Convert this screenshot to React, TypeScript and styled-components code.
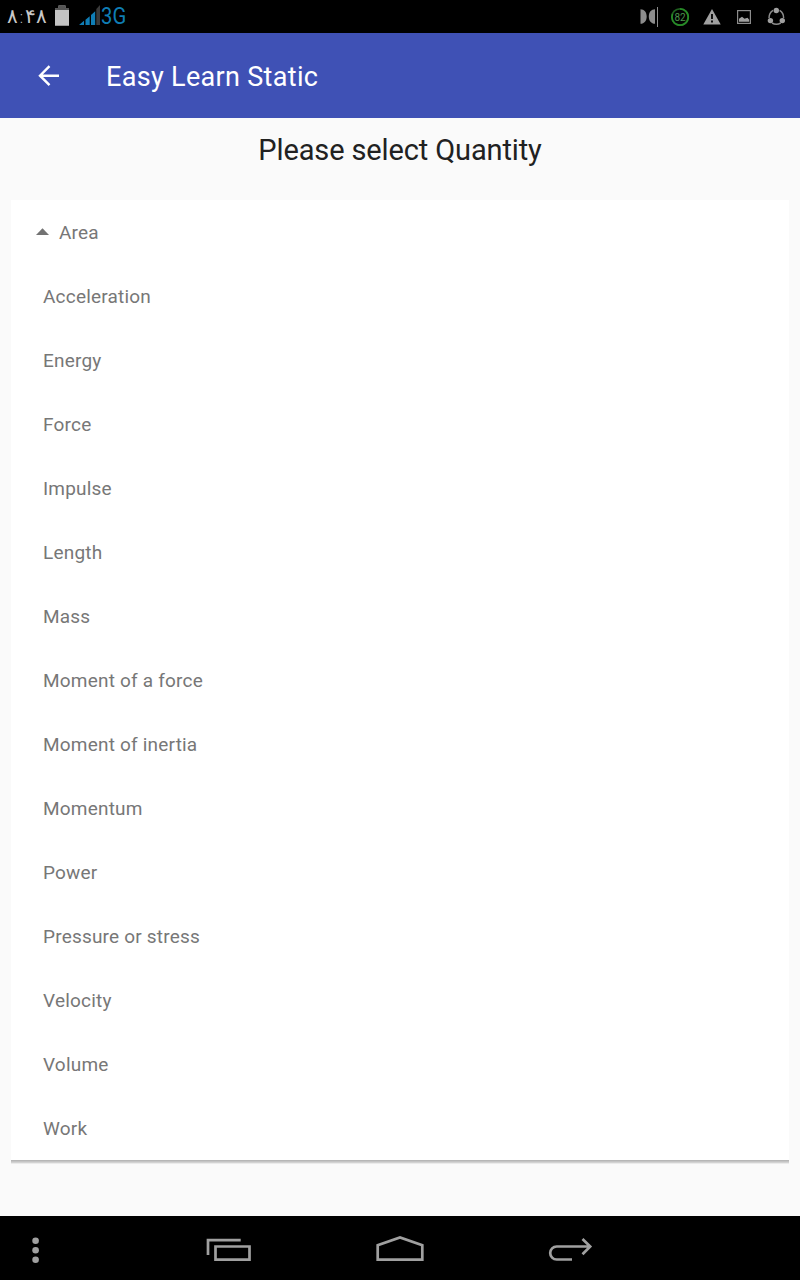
import React from "react";
import styled, { createGlobalStyle } from "styled-components";

const GlobalStyle = createGlobalStyle`
  * { box-sizing: border-box; }
  body { margin: 0; background: #fafafa; font-family: Roboto, "Liberation Sans", sans-serif; }
`;

const Screen = styled.div`
  display: flex;
  flex-direction: column;
  width: 800px;
  height: 1280px;
  overflow: hidden;
  background: #fafafa;
`;

const StatusBar = styled.header`
  display: flex;
  align-items: center;
  height: 33px;
  flex: none;
  padding: 0 8px 0 7px;
  background: #000;
`;

const Clock = styled.span`
  width: 48px;
  font: 200 20px/33px "DejaVu Sans", sans-serif;
  color: #c8c8c8;
  white-space: nowrap;
`;

const StatusIcon = styled.svg<{ $w: number }>`
  width: ${(p) => p.$w}px;
  height: 33px;
  flex: none;
  display: block;
`;

const Network = styled.span`
  font-size: 23px;
  line-height: 32px;
  color: #0f7db5;
  transform: scaleX(0.88);
  transform-origin: left;
`;

const Notifications = styled.div`
  display: flex;
  margin-left: auto;
`;

const AppBar = styled.div`
  display: flex;
  align-items: center;
  height: 85px;
  flex: none;
  padding: 0 0 0 32px;
  background: #3f51b5;
`;

const BackButton = styled.button`
  width: 32px;
  height: 32px;
  padding: 0;
  border: 0;
  background: none;
`;

const Title = styled.h1`
  margin: 3px 0 0 42px;
  font-size: 27px;
  font-weight: 400;
  line-height: 36px;
  letter-spacing: 0.32px;
  color: #fff;
`;

const Content = styled.main`
  display: flex;
  flex-direction: column;
  flex: 1;
  padding: 0 11px;
`;

const Heading = styled.h2`
  margin: 0;
  height: 82px;
  padding-top: 14px;
  font-size: 29px;
  font-weight: 400;
  line-height: 36px;
  letter-spacing: -0.13px;
  text-align: center;
  color: #212121;
`;

const Card = styled.ul`
  margin: 0;
  padding: 0;
  list-style: none;
  background: #fff;
  height: 960px;
  box-shadow: 0 1px 0 #b6b6b6, 0 2px 0 #c4c4c4, 0 3px 0 #d2d2d2, 0 4px 0 #ebebeb;
`;

const Row = styled.li<{ $selected?: boolean }>`
  display: flex;
  align-items: center;
  gap: 10px;
  height: 64px;
  padding-left: ${(p) => (p.$selected ? 25 : 32)}px;
  padding-top: 1px;
  font-size: 19px;
  letter-spacing: 0.2px;
  color: #777;
`;

const Caret = styled.svg`
  width: 13px;
  height: 8px;
  margin-bottom: 2px;
  fill: #737373;
`;

const NavBar = styled.nav`
  display: flex;
  height: 64px;
  flex: none;
  background: #000;
`;

const NavIcon = styled.svg<{ $w: number }>`
  width: ${(p) => p.$w}px;
  height: 64px;
  flex: none;
  fill: none;
  stroke: #a0a0a0;
  stroke-width: 2.7;
`;

const quantities = [
  "Area", "Acceleration", "Energy", "Force", "Impulse", "Length", "Mass",
  "Moment of a force", "Moment of inertia", "Momentum", "Power",
  "Pressure or stress", "Velocity", "Volume", "Work",
];

export default function App() {
  return (
    <Screen>
      <GlobalStyle />
      <StatusBar>
        <Clock>۸:۴۸</Clock>
        <StatusIcon $w={24} viewBox="55 0 24 33">
          <path d="M55 8h3.5V5.5h7V8H69v17.7H55z" fill="#c4c4c4" />
          <path d="M55 8h3.5V5.5h7V8H69v2H55z" fill="#555" />
        </StatusIcon>
        <StatusIcon $w={22} viewBox="79 0 22 33">
          <path d="M79 25l5-4.2V25zM85.5 25v-5.2l4.2-3.6V25zM91 25v-9.9l4.2-3.8V25z" fill="#0f7db5" />
          <path d="M96.3 25V9L100 5v20z" fill="#3a3a3a" />
        </StatusIcon>
        <Network>3G</Network>
        <Notifications>
          <StatusIcon $w={32} viewBox="632 0 32 33">
            <path d="M640.5 9.2c3.8 0 6.2 3 6.2 7.3s-2.4 7.3-6.2 7.3zM655 9.2c-3.8 0-6.2 3-6.2 7.3s2.4 7.3 6.2 7.3z" fill="#8c8c8c" />
            <path d="M657.5 7v20" stroke="#8c8c8c" />
          </StatusIcon>
          <StatusIcon $w={32} viewBox="664 0 32 33">
            <circle cx="680" cy="17" r="8.2" fill="none" stroke="#1f5f1f" strokeWidth="1.7" />
            <path d="M680 8.8a8.2 8.2 0 1 1-7.5 5" fill="none" stroke="#278a27" strokeWidth="1.7" />
            <text x="680" y="20.6" textAnchor="middle" fontSize="10" fontFamily="Roboto" fill="#4c934c">82</text>
          </StatusIcon>
          <StatusIcon $w={32} viewBox="696 0 32 33">
            <path d="M712 9l8.7 15.5h-17.4z" fill="#a0a0a0" />
            <path d="M712 14v5M712 20.5v2" stroke="#000" strokeWidth="1.8" />
          </StatusIcon>
          <StatusIcon $w={32} viewBox="728 0 32 33">
            <rect x="737.6" y="10.6" width="12.8" height="12.8" fill="none" stroke="#8c8c8c" strokeWidth="1.2" />
            <path d="M739 21.7v-3l3-2 2.5 2 3-1 1.7 2v2z" fill="#a0a0a0" />
          </StatusIcon>
          <StatusIcon $w={32} viewBox="760 0 32 33">
            <path d="M773 10.4Q769 13 769 18M779.6 10.4Q783.8 13 783.6 18M772 23Q776.4 25.7 780.8 23" fill="none" stroke="#8c8c8c" strokeWidth="1.5" />
            <g fill="#a0a0a0">
              <circle cx="776.3" cy="10.5" r="2.7" />
              <circle cx="770.4" cy="20.6" r="2.7" />
              <circle cx="782.3" cy="20.6" r="2.7" />
            </g>
          </StatusIcon>
        </Notifications>
      </StatusBar>
      <AppBar>
        <BackButton aria-label="Back">
          <svg width="32" height="32" viewBox="32 60 32 32" fill="none" stroke="#fff" strokeWidth="2.4">
            <path d="M59 75.7H40M49.5 66.2L40 75.7l9.5 9.5" />
          </svg>
        </BackButton>
        <Title>Easy Learn Static</Title>
      </AppBar>
      <Content>
        <Heading>Please select Quantity</Heading>
        <Card>
          {quantities.map((q, i) => (
            <Row key={q} $selected={i === 0}>
              {i === 0 && (
                <Caret viewBox="0 0 13 8"><path d="M0 7L6.5 0.3 13 7z" /></Caret>
              )}
              <span>{q}</span>
            </Row>
          ))}
        </Card>
      </Content>
      <NavBar>
        <NavIcon $w={144} viewBox="0 1216 144 64">
          <g fill="#a0a0a0" stroke="none">
            <circle cx="35.6" cy="1240.7" r="3.3" />
            <circle cx="35.6" cy="1250.2" r="3.3" />
            <circle cx="35.6" cy="1259.7" r="3.3" />
          </g>
        </NavIcon>
        <NavIcon $w={170} viewBox="144 1216 170 64">
          <path d="M208 1255v-14.8h32.7M215.5 1246.5h34v13.2h-34z" />
        </NavIcon>
        <NavIcon $w={172} viewBox="314 1216 172 64">
          <path d="M377.7 1259.7v-14.6l22.3-7.7 22.3 7.7v14.6z" />
        </NavIcon>
        <NavIcon $w={170} viewBox="486 1216 170 64">
          <path d="M572 1259.5h-15.3a6.5 6.5 0 0 1 0-13H590M582.5 1239l7.7 7.5-7.7 7.8" />
        </NavIcon>
      </NavBar>
    </Screen>
  );
}
